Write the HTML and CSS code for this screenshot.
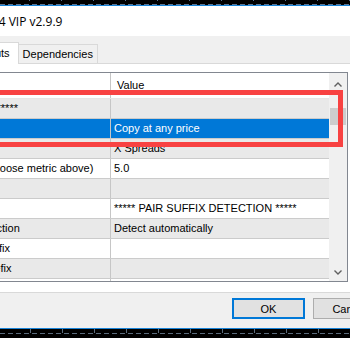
FILE: index.html
```html
<!DOCTYPE html>
<html lang="en">
<head>
    <meta charset="UTF-8">
    <meta name="viewport" content="width=device-width, initial-scale=1.0">
    <title>Expert properties</title>
    <link rel="stylesheet" href="styles.css">
</head>
<body>

    <!-- Chart behind the dialog, top edge -->
    <div class="chart chart-top"></div>

    <div class="dialog">
        <div class="titlebar"><span class="title">Trade Copier MT4 VIP v2.9.9</span></div>

        <div class="dialog-body">
            <!-- Tabs -->
            <div class="tabs">
                <div class="tab">Common</div>
                <div class="tab active">Inputs</div>
                <div class="tab">Dependencies</div>
            </div>

            <!-- Inputs list -->
            <div class="panel">
                <div class="list">
                    <div class="list-rows">
                        <div class="row header"><div class="name">Variable</div><div class="value">Value</div></div>
                        <div class="row alt"><div class="name">****** SETUP ******</div><div class="value"></div></div>
                        <div class="row selected"><div class="name">Copy mode</div><div class="value">Copy at any price</div></div>
                        <div class="row alt"><div class="name">Spread filter</div><div class="value">X Spreads</div></div>
                        <div class="row"><div class="name">Max spread (choose metric above)</div><div class="value">5.0</div></div>
                        <div class="row alt"><div class="name">Spacer</div><div class="value"></div></div>
                        <div class="row"><div class="name">Suffix info</div><div class="value">***** PAIR SUFFIX DETECTION *****</div></div>
                        <div class="row alt"><div class="name">Pair suffix detection</div><div class="value">Detect automatically</div></div>
                        <div class="row"><div class="name">Manual pair suffix</div><div class="value"></div></div>
                        <div class="row alt"><div class="name">Manual pair prefix</div><div class="value"></div></div>
                        <div class="row"><div class="name">Excluded pairs</div><div class="value"></div></div>
                    </div>
                    <div class="scrollbar">
                        <div class="sb-btn sb-up">
                            <svg width="8" height="5" viewBox="0 0 8 5"><polyline points="0.5,4.5 4,1 7.5,4.5" fill="none" stroke="#606060" stroke-width="1.4"/></svg>
                        </div>
                        <div class="sb-track"><div class="sb-thumb"></div></div>
                        <div class="sb-btn sb-down">
                            <svg width="8" height="5" viewBox="0 0 8 5"><polyline points="0.5,0.5 4,4 7.5,0.5" fill="none" stroke="#606060" stroke-width="1.4"/></svg>
                        </div>
                    </div>
                </div>
            </div>

            <!-- Dialog buttons -->
            <div class="buttons">
                <button class="btn default">OK</button>
                <button class="btn">Cancel</button>
                <button class="btn">Reset</button>
            </div>
        </div>
    </div>

    <!-- Red marker drawn over the screenshot -->
    <div class="highlight"></div>

    <!-- Chart behind the dialog, bottom edge -->
    <div class="chart chart-bottom"></div>

</body>
</html>
```

FILE: styles.css
```css
html, body {
    margin: 0;
    padding: 0;
    overflow: hidden;
    background-color: #000;
}
body {
    position: relative;
    width: 350px;
    height: 338px;
    font-family: 'Liberation Sans', Arial, sans-serif;
    font-size: 11px;
    color: #000;
}

/* chart strips */
.chart-top {
    height: 5px;
    background:
        repeating-linear-gradient(90deg, #5b7592 0 5px, transparent 5px 8px) left bottom / 100% 1px no-repeat,
        repeating-linear-gradient(90deg, transparent 0 29px, #5b7592 29px 30px, transparent 30px 32px) left top / 100% 1px no-repeat,
        #000;
}
.chart-bottom {
    height: 9px;
    background:
        repeating-linear-gradient(90deg, #5b6b7c 0 5px, transparent 5px 8px) 0 4px / 100% 1px no-repeat,
        repeating-linear-gradient(90deg, transparent 0 30px, #5b6b7c 30px 31px, transparent 31px 32px) left top / 100% 4px no-repeat,
        #000;
}

/* dialog */
.dialog {
    margin-left: -96px;
    width: 572px;
    background-color: #f0f0f0;
    border-top: 1px solid #1883d7;
    border-bottom: 1px solid #1883d7;
}
.titlebar {
    height: 30px;
    display: flex;
    align-items: center;
    padding-left: 2px;
    background-color: #fff;
    font-family: 'Open Sans', sans-serif;
    font-size: 12px;
    white-space: nowrap;
}
.dialog-body {
    padding: 6px 6px 9px 6px;
}

/* tabs */
.tabs {
    display: flex;
    align-items: flex-end;
    height: 21px;
    position: relative;
    z-index: 1;
}
.tab {
    height: 18px;
    line-height: 18px;
    padding: 0 4px;
    border: 1px solid #d9d9d9;
    border-bottom: none;
    background-color: #f0f0f0;
    white-space: nowrap;
}
.tab:first-child {
    padding: 0 9px;
}
.tab.active {
    height: 21px;
    line-height: 20px;
    padding: 0 8px 0 6px;
    margin: 0 -1px -1px -2px;
    background-color: #fff;
    position: relative;
}

/* panel with list */
.panel {
    background-color: #fff;
    border: 1px solid #d9d9d9;
    padding: 8px 8px 10px 8px;
}
.list {
    display: flex;
    width: 427px;
    height: 208px;
    border: 1px solid #828790;
    overflow: hidden;
}
.list-rows {
    width: 409px;
    overflow: hidden;
}
.row {
    display: flex;
    height: 19px;
    line-height: 19px;
    border-bottom: 1px solid #cbcbcb;
    background-color: #fff;
    white-space: nowrap;
}
.row.alt {
    background-color: #e9e9e9;
}
.row.selected {
    background-color: #0078d7;
    color: #fff;
}
.row.header {
    height: 25px;
    line-height: 24px;
    border-bottom: 1px solid #e5e5e5;
    background-color: #fff;
}
.name {
    width: 186px;
    padding-left: 4px;
    border-right: 1px solid #c6c6c6;
    overflow: hidden;
}
.value {
    flex: 1;
    padding-left: 3px;
    overflow: hidden;
}
.row.header .value {
    padding-left: 6px;
}

/* scrollbar */
.scrollbar {
    width: 18px;
    display: flex;
    flex-direction: column;
    background-color: #f0f0f0;
}
.sb-btn {
    display: flex;
    align-items: center;
    justify-content: center;
}
.sb-up {
    height: 22px;
}
.sb-down {
    height: 17px;
}
.sb-track {
    flex: 1;
}
.sb-thumb {
    margin: 13px 1px 0 1px;
    height: 17px;
    background-color: #cdcdcd;
}

/* buttons */
.buttons {
    display: flex;
    justify-content: flex-end;
    gap: 8px;
    margin-top: 5px;
    padding-right: 3px;
}
.btn {
    width: 73px;
    height: 21px;
    padding: 0;
    border: 1px solid #adadad;
    background-color: #e1e1e1;
    font-family: 'Liberation Sans', Arial, sans-serif;
    font-size: 11px;
    color: #000;
}
.btn.default {
    border: 2px solid #0078d7;
}

/* red annotation box */
.highlight {
    position: absolute;
    left: -20px;
    top: 90px;
    width: 363px;
    height: 57px;
    box-sizing: border-box;
    border: 5px solid #f84242;
}
```
